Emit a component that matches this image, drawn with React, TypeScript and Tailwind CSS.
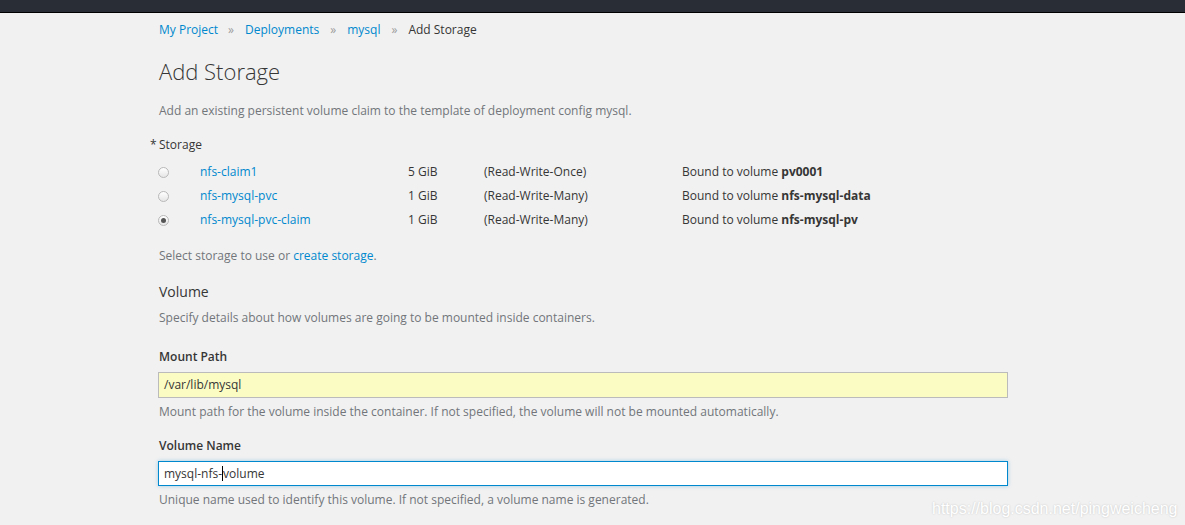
import React from "react";

const rows = [
  { name: "nfs-claim1", size: "5 GiB", mode: "(Read-Write-Once)", vol: "pv0001", checked: false },
  { name: "nfs-mysql-pvc", size: "1 GiB", mode: "(Read-Write-Many)", vol: "nfs-mysql-data", checked: false },
  { name: "nfs-mysql-pvc-claim", size: "1 GiB", mode: "(Read-Write-Many)", vol: "nfs-mysql-pv", checked: true },
];

function Radio({ checked }: { checked: boolean }) {
  return (
    <div className="w-[11px] h-[11px] rounded-full border border-[#b8b8b8] bg-gradient-to-b from-[#ffffff] to-[#e6e6e6] flex items-center justify-center">
      {checked && <div className="w-[5px] h-[5px] rounded-full bg-[#555]" />}
    </div>
  );
}

export default function App() {
  return (
    <div
      className="relative w-[1185px] h-[525px] overflow-hidden bg-[#f1f1f1] text-[#363636] text-[12px]"
      style={{ fontFamily: '"Open Sans", "Liberation Sans", sans-serif' }}
    >
      <div className="h-[13px] bg-[#292d35] border-b border-black" />
      <div className="pl-[159px]">
        <div className="mt-[8px] h-[18px] leading-[18px] flex items-center">
          <span className="text-[#0088ce]">My Project</span>
          <span className="ml-[10px] mr-[11px] text-[#9c9c9c] text-[12px]">»</span>
          <span className="text-[#0088ce]">Deployments</span>
          <span className="ml-[11px] mr-[11px] text-[#9c9c9c] text-[12px]">»</span>
          <span className="text-[#0088ce]">mysql</span>
          <span className="ml-[11px] mr-[11px] text-[#9c9c9c] text-[12px]">»</span>
          <span>Add Storage</span>
        </div>
        <h1 className="mt-[18px] h-[28px] leading-[28px] text-[22px] font-light text-[#363636]">Add Storage</h1>
        <p className="mt-[17px] h-[18px] leading-[18px] text-[#72767b]">
          Add an existing persistent volume claim to the template of deployment config mysql.
        </p>
        <div className="mt-[16px] h-[18px] leading-[18px] relative">
          <span className="absolute left-[-9px]">*</span>
          <span>Storage</span>
        </div>
        <div className="mt-[6px] ml-[-1px]">
          {rows.map((r) => (
            <div key={r.name} className="grid grid-cols-[42px_208px_76px_198px_auto] h-[24px] items-center">
              <div className="pl-[0px]">
                <Radio checked={r.checked} />
              </div>
              <span className="text-[#0088ce]">{r.name}</span>
              <span>{r.size}</span>
              <span>{r.mode}</span>
              <span>
                Bound to volume <b className="font-bold">{r.vol}</b>
              </span>
            </div>
          ))}
        </div>
        <p className="mt-[15px] h-[18px] leading-[18px] text-[#72767b]">
          Select storage to use or <span className="text-[#0088ce]">create storage</span>.
        </p>
        <h3 className="mt-[17px] h-[20px] leading-[20px] text-[14px] text-[#363636]">Volume</h3>
        <p className="mt-[7px] h-[18px] leading-[18px] text-[#72767b]">
          Specify details about how volumes are going to be mounted inside containers.
        </p>
        <div className="mt-[21px] h-[18px] leading-[18px] font-semibold">Mount Path</div>
        <div className="mt-[6px] ml-[-1px] w-[850px] h-[26px] border border-[#bbbbbb] bg-[#fafcc4] px-[5px] flex items-center">
          /var/lib/mysql
        </div>
        <p className="mt-[5px] h-[18px] leading-[18px] text-[#72767b]">
          Mount path for the volume inside the container. If not specified, the volume will not be mounted automatically.
        </p>
        <div className="mt-[16px] h-[18px] leading-[18px] font-semibold">Volume Name</div>
        <div className="mt-[6px] ml-[-1px] w-[850px] h-[25px] border border-[#0088ce] bg-white px-[5px] flex items-center shadow-[0_0_4px_rgba(0,136,206,0.35)]">
          <span>mysql-nfs-</span>
          <span className="inline-block w-px h-[15px] bg-black" />
          <span>volume</span>
        </div>
        <p className="mt-[5px] h-[18px] leading-[18px] text-[#72767b]">
          Unique name used to identify this volume. If not specified, a volume name is generated.
        </p>
      </div>
      <div
        className="absolute left-[932px] top-[497px] text-[16px] text-white tracking-[0px]"
        style={{ fontFamily: '"Liberation Sans", Arial, sans-serif', textShadow: "0 0 2px rgba(0,0,0,0.2)" }}
      >
        https://blog.csdn.net/pingweicheng
      </div>
    </div>
  );
}
